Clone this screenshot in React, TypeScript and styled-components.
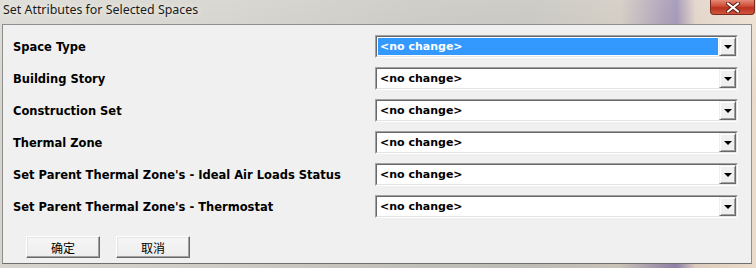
import React from 'react';
import styled, { createGlobalStyle } from 'styled-components';

const GlobalStyle = createGlobalStyle`
  html, body {
    margin: 0;
    padding: 0;
    background: #d9d4cc;
  }
`;

const Window = styled.div`
  width: 756px;
  height: 268px;
  box-sizing: border-box;
  display: flex;
  flex-direction: column;
  padding: 0 4px 4px 2px;
  background:
    linear-gradient(180deg, rgba(255, 255, 255, 0.25) 0%, rgba(255, 255, 255, 0) 40%),
    linear-gradient(
      90deg,
      #d6d4cc 0%,
      #cdcbc3 30%,
      #c0bfb8 55%,
      #bdbcb5 70%,
      #c9c2b7 82%,
      #9a8aa8 88%,
      #8e80a6 89.5%,
      #dccbbd 92%,
      #eadbcb 100%
    );
`;

const TitleBar = styled.div`
  height: 24px;
  flex: none;
  display: flex;
  align-items: flex-start;
  justify-content: space-between;
`;

const Title = styled.div`
  padding: 2px 0 0 1px;
  font-family: 'Noto Sans', 'Open Sans', sans-serif;
  font-size: 12.4px;
  line-height: 16px;
  color: #1a1a1a;
  text-shadow: 0 0 6px rgba(255, 255, 255, 0.9);
`;

const CloseButton = styled.div`
  width: 45px;
  height: 15px;
  margin-right: -3px;
  box-sizing: border-box;
  border: 1px solid #7a2a1e;
  border-top: none;
  border-radius: 0 0 4px 4px;
  background: linear-gradient(180deg, #e48a78 0%, #cf4b35 45%, #b8321d 55%, #d2553c 100%);
  display: flex;
  align-items: center;
  justify-content: center;
`;

const Client = styled.div`
  flex: 1;
  box-sizing: border-box;
  background: #f0f0f0;
  border-top: 1px solid #8e8e8e;
  border-left: 1px solid #8e8e8e;
  border-right: 1px solid #8e8e8e;
  border-bottom: 1px solid #6e6e6e;
  padding: 10px 13px 0 10px;
  display: flex;
  flex-direction: column;
`;

const Form = styled.div`
  display: grid;
  grid-template-columns: 362px 1fr;
  row-gap: 9px;
  align-items: center;
`;

const Label = styled.div`
  font-family: 'DejaVu Sans', 'Liberation Sans', sans-serif;
  font-weight: bold;
  font-size: 11.5px;
  color: #000;
  white-space: nowrap;
`;

const Combo = styled.div`
  height: 23px;
  box-sizing: border-box;
  display: flex;
  border-top: 1px solid #a0a0a0;
  border-left: 1px solid #a0a0a0;
  border-right: 1px solid #ffffff;
  border-bottom: 1px solid #ffffff;
`;

const ComboInner = styled.div`
  flex: 1;
  display: flex;
  background: #fff;
  border-top: 1px solid #696969;
  border-left: 1px solid #696969;
  border-right: 1px solid #e3e3e3;
  border-bottom: 1px solid #e3e3e3;
`;

const ComboValue = styled.div<{ $selected?: boolean }>`
  flex: 1;
  margin: 1px;
  padding-left: 2px;
  display: flex;
  align-items: center;
  font-family: 'DejaVu Sans', 'Liberation Sans', sans-serif;
  font-weight: bold;
  font-size: 11px;
  color: ${p => (p.$selected ? '#ffffff' : '#000000')};
  background: ${p => (p.$selected ? '#3399ff' : 'transparent')};
`;

const DropButton = styled.div`
  width: 17px;
  box-sizing: border-box;
  background: #f0f0f0;
  border-top: 1px solid #f0f0f0;
  border-left: 1px solid #f0f0f0;
  border-right: 1px solid #696969;
  border-bottom: 1px solid #696969;
  box-shadow: inset 1px 1px 0 #ffffff, inset -1px -1px 0 #a0a0a0;
  display: flex;
  align-items: center;
  justify-content: center;
`;

const Arrow = styled.div`
  width: 0;
  height: 0;
  border-left: 4px solid transparent;
  border-right: 4px solid transparent;
  border-top: 4px solid #000;
`;

const ButtonRow = styled.div`
  display: flex;
  gap: 16px;
  margin-top: 18px;
  padding-left: 13px;
`;

const Button = styled.div`
  width: 74px;
  height: 22px;
  box-sizing: border-box;
  display: flex;
  align-items: center;
  justify-content: center;
  background: linear-gradient(180deg, #f6f6f6 0%, #ececec 100%);
  border-top: 1px solid #ffffff;
  border-left: 1px solid #ffffff;
  border-right: 1px solid #696969;
  border-bottom: 1px solid #696969;
  box-shadow: inset -1px -1px 0 #a0a0a0, inset 1px 1px 0 #e3e3e3;
  font-family: 'Noto Sans CJK SC', 'Noto Sans', sans-serif;
  font-size: 12px;
  color: #000;
`;

const fields = [
  'Space Type',
  'Building Story',
  'Construction Set',
  'Thermal Zone',
  "Set Parent Thermal Zone's - Ideal Air Loads Status",
  "Set Parent Thermal Zone's - Thermostat",
];

const CloseIcon = () => (
  <svg width="14" height="11" viewBox="0 0 14 11">
    <path
      d="M2 1.5 L12 9.5 M12 1.5 L2 9.5"
      stroke="#5a1a10"
      strokeWidth="4"
      strokeLinecap="round"
    />
    <path
      d="M2 1.5 L12 9.5 M12 1.5 L2 9.5"
      stroke="#ffffff"
      strokeWidth="2.2"
      strokeLinecap="round"
    />
  </svg>
);

const App: React.FC = () => (
  <>
    <GlobalStyle />
    <Window>
      <TitleBar>
        <Title>Set Attributes for Selected Spaces</Title>
        <CloseButton>
          <CloseIcon />
        </CloseButton>
      </TitleBar>
      <Client>
        <Form>
          {fields.map((label, i) => (
            <React.Fragment key={label}>
              <Label>{label}</Label>
              <Combo>
                <ComboInner>
                  <ComboValue $selected={i === 0}>&lt;no change&gt;</ComboValue>
                  <DropButton>
                    <Arrow />
                  </DropButton>
                </ComboInner>
              </Combo>
            </React.Fragment>
          ))}
        </Form>
        <ButtonRow>
          <Button>确定</Button>
          <Button>取消</Button>
        </ButtonRow>
      </Client>
    </Window>
  </>
);

export default App;
